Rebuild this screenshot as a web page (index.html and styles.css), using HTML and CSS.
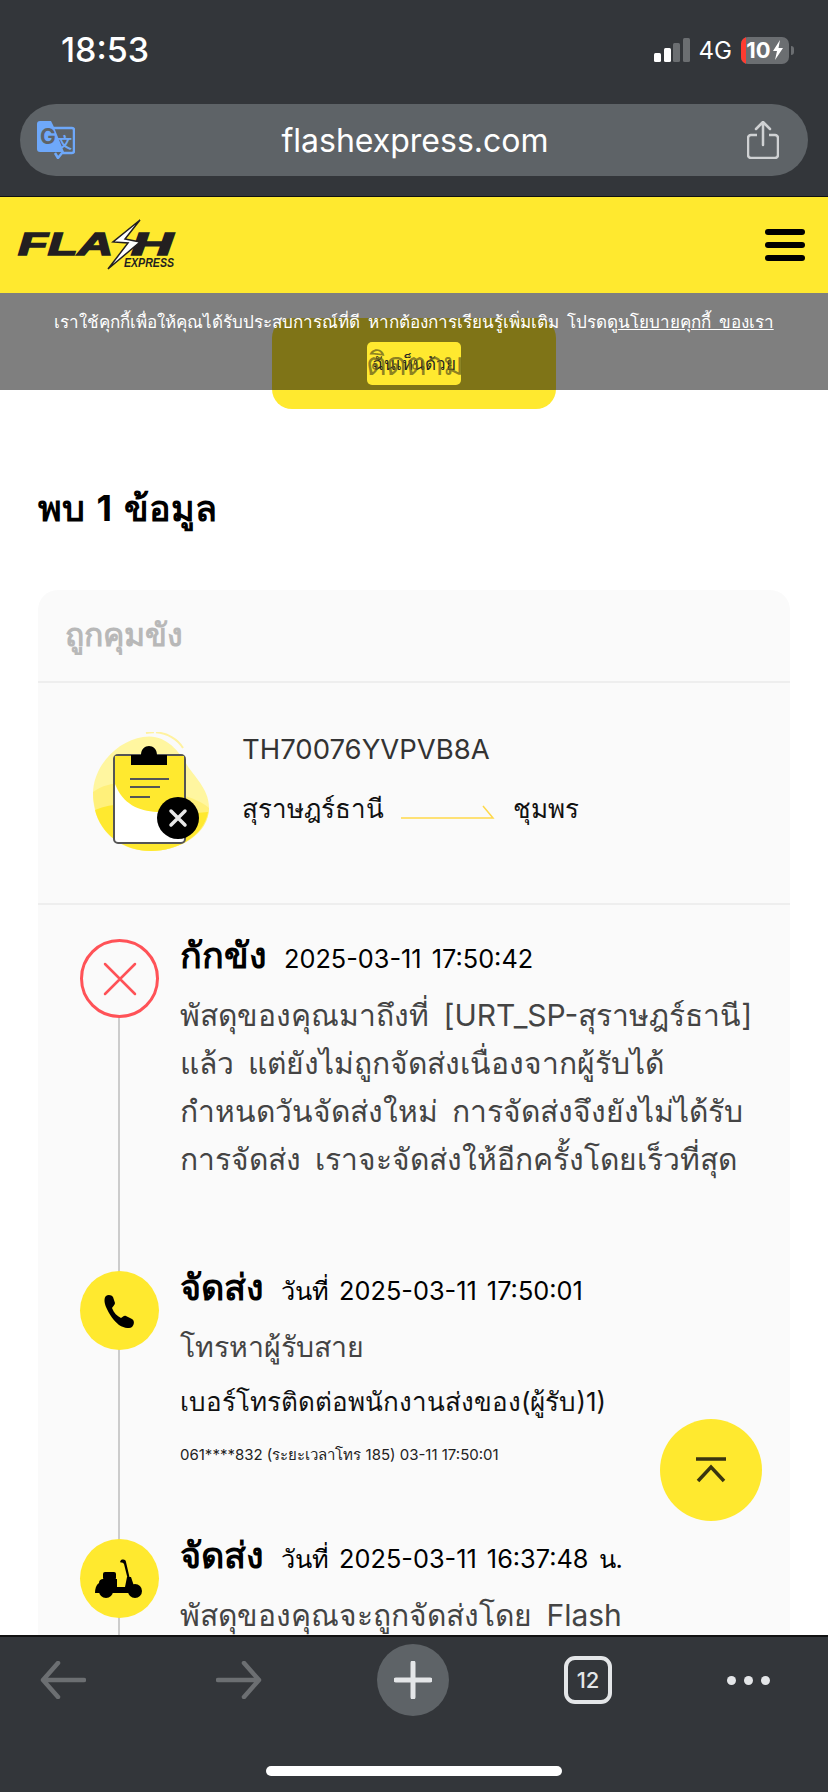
FILE: index.html
```html
<!DOCTYPE html>
<html lang="th">
<head>
  <meta charset="UTF-8" />
  <meta name="viewport" content="width=device-width, initial-scale=1.0"/>
  <title>Flash Express</title>
  <link rel="stylesheet" href="styles.css">
</head>
<body>
  <div class="phone">
    <div class="top-chrome">
      <div class="status-bar">
        <span class="clock">18:53</span>
        <div class="status-right">
          <svg class="signal" width="36" height="24" viewBox="0 0 36 24">
            <rect x="0" y="15" width="7" height="9" rx="1.5" fill="#fff"/>
            <rect x="10" y="10" width="7" height="14" rx="1.5" fill="#fff"/>
            <rect x="19" y="5" width="7" height="19" rx="1.5" fill="#6b6e71"/>
            <rect x="29" y="0" width="7" height="24" rx="1.5" fill="#6b6e71"/>
          </svg>
          <span class="net">4G</span>
          <span class="battery"><span class="battery-low"></span><span class="battery-text">10</span>
            <svg class="bolt" width="12" height="20" viewBox="0 0 12 20"><path d="M8 0 1 11h4l-2 9 8-12H6.500z" fill="#fff"/></svg>
          </span>
          <span class="battery-cap"></span>
        </div>
      </div>
      <div class="url-bar">
        <svg class="translate" width="38" height="38" viewBox="0 0 38 38">
          <path d="M16 7h19a2 2 0 0 1 2 2v21a2 2 0 0 1-2 2H25l-4 5-3-5" fill="none" stroke="#6ea8fa" stroke-width="2.500" stroke-linejoin="round"/>
          <path d="M3 0h11l2 4 11 27H3a3 3 0 0 1-3-3V3a3 3 0 0 1 3-3z" fill="#6ea8fa"/>
          <text class="icon-g" x="3" y="23">G</text>
          <text class="icon-wen" x="20" y="27">文</text>
        </svg>
        <span class="url-text">flashexpress.com</span>
        <svg class="share" width="32" height="38" viewBox="0 0 32 38">
          <path d="M10 14H4a3 3 0 0 0-3 3v17a3 3 0 0 0 3 3h24a3 3 0 0 0 3-3V17a3 3 0 0 0-3-3h-6" fill="none" stroke="#cfd1d3" stroke-width="2.500"/>
          <path d="M16 24V2M9 8l7-7 7 7" fill="none" stroke="#cfd1d3" stroke-width="2.500" stroke-linecap="round" stroke-linejoin="round"/>
        </svg>
      </div>
    </div>

    <header class="site-header">
      <svg class="logo" width="162" height="56" viewBox="0 0 162 56">
        <text class="logo-word" x="2" y="38" textLength="95" lengthAdjust="spacingAndGlyphs">FLA</text>
        <text class="logo-word" x="115" y="38" textLength="42" lengthAdjust="spacingAndGlyphs">H</text>
        <path d="M124 3 97 25l15 1-20 26 32-27-15-3z" fill="#fff" stroke="#231f20" stroke-width="1.500"/>
        <text class="logo-sub" x="108" y="50" textLength="50" lengthAdjust="spacingAndGlyphs">EXPRESS</text>
      </svg>
      <div class="burger"><span></span><span></span><span></span></div>
    </header>

    <main class="page">
      <div class="follow-row"><button class="follow-btn"><span class="follow-label">ติดตาม</span></button></div>
      <h1 class="result-title">พบ 1 ข้อมูล</h1>

      <section class="card">
        <div class="card-status">ถูกคุมขัง</div>
        <div class="parcel">
          <svg class="parcel-icon" width="116" height="122" viewBox="0 0 116 122">
            <path d="M50 5c22-4 36 14 44 28 6 10 22 24 22 42 0 26-30 44-58 44C24 119 0 96 0 62 0 34 24 9 50 5z" fill="#fff6a0"/>
            <path d="M0 60c20-14 40-8 58-4 20 4 44 8 58 20 0 26-30 43-58 43C24 119 0 92 0 60z" fill="#fff07a"/>
            <path d="M2 78c18-8 38-6 56-2 20 4 44 6 57 4-4 24-31 39-57 39C30 119 8 102 2 78z" fill="#ffe92f"/>
            <path d="M53 1c14-3 30 3 37 15" fill="none" stroke="#fff2a0" stroke-width="2" stroke-dasharray="8 2 40"/>
            <rect x="21" y="23" width="71" height="88" rx="4" fill="#fff" stroke="#555" stroke-width="2"/>
            <path d="M22 24h69v56H64C45 79 30 72 22 52z" fill="#ffe92f"/>
            <path d="M38 33V23h10c0-12 16-12 16 0h10v10z" fill="#000"/>
            <path d="M37 47h39M37 55h30M37 65h20" stroke="#555" stroke-width="2"/>
            <circle cx="85" cy="86" r="21" fill="#000"/>
            <path d="M78 79l14 14M92 79 78 93" stroke="#e8e8e8" stroke-width="3.500" stroke-linecap="round"/>
          </svg>
          <div class="parcel-info">
            <div class="parcel-no">TH70076YVPVB8A</div>
            <div class="route">
              <span>สุราษฎร์ธานี</span>
              <svg class="route-arrow" width="94" height="14" viewBox="0 0 94 14"><path d="M0 13h92L82 1" fill="none" stroke="#ffd94a" stroke-width="1.500"/></svg>
              <span>ชุมพร</span>
            </div>
          </div>
        </div>

        <div class="timeline">
          <div class="event event-hold">
            <div class="dot dot-red">
              <svg width="36" height="36" viewBox="0 0 36 36"><path d="M3 3l30 30M33 3 3 33" stroke="#ff5257" stroke-width="2.500" stroke-linecap="round"/></svg>
            </div>
            <div class="event-body">
              <div class="event-head"><b>กักขัง</b><span>2025-03-11 17:50:42</span></div>
              <p class="event-text">พัสดุของคุณมาถึงที่ [URT_SP-สุราษฎร์ธานี]<br>แล้ว แต่ยังไม่ถูกจัดส่งเนื่องจากผู้รับได้<br>กำหนดวันจัดส่งใหม่ การจัดส่งจึงยังไม่ได้รับ<br>การจัดส่ง เราจะจัดส่งให้อีกครั้งโดยเร็วที่สุด</p>
            </div>
          </div>

          <div class="event event-call">
            <div class="dot">
              <svg width="34" height="34" viewBox="0 0 34 34"><path d="M3 2c2-2 6-1 7 1l2 6c0 2-2 3-3 5 2 5 5 8 9 10 2-1 3-3 5-2l6 3c3 2 2 6 0 8-3 2-8 1-13-2C11 27 6 20 3 13 1 8 1 4 3 2z" fill="#000"/></svg>
            </div>
            <div class="event-body">
              <div class="event-head"><b>จัดส่ง</b><span>วันที่ 2025-03-11 17:50:01</span></div>
              <p class="event-text event-text-short">โทรหาผู้รับสาย</p>
              <p class="event-phone">เบอร์โทรติดต่อพนักงานส่งของ(ผู้รับ)1)</p>
              <p class="event-log">061****832 (ระยะเวลาโทร 185) 03-11 17:50:01</p>
            </div>
          </div>

          <div class="event">
            <div class="dot">
              <svg width="50" height="40" viewBox="0 0 50 40">
                <path d="M26 1c3-1 5 0 5 2l6 26h-2L29 5c-1-2-3-1-4-2z" fill="#000"/>
                <rect x="8" y="13" width="13" height="8" rx="2" fill="#000"/>
                <path d="M4 24c0-3 2-4 4-4h14v8l8 0 2-10h4l3 9c4 1 6 4 6 7H0c0-4 1-8 4-10z" fill="#000"/>
                <circle cx="11" cy="32" r="7" fill="#000"/>
                <circle cx="40" cy="32" r="7" fill="#000"/>
              </svg>
            </div>
            <div class="event-body">
              <div class="event-head"><b>จัดส่ง</b><span>วันที่ 2025-03-11 16:37:48 น.</span></div>
              <p class="event-text">พัสดุของคุณจะถูกจัดส่งโดย Flash</p>
            </div>
          </div>
        </div>
      </section>
    </main>

    <div class="cookie-bar">
      <p>เราใช้คุกกี้เพื่อให้คุณได้รับประสบการณ์ที่ดี หากต้องการเรียนรู้เพิ่มเติม โปรดดู<a href="#">นโยบายคุกกี้ ของเรา</a></p>
      <button class="cookie-btn">ฉันเห็นด้วย</button>
    </div>

    <button class="to-top">
      <svg width="32" height="26" viewBox="0 0 32 26"><path d="M1 2h30M3 24 16 10l13 14" fill="none" stroke="#3a3510" stroke-width="3.500"/></svg>
    </button>

    <nav class="bottom-bar">
      <div class="nav-row">
        <svg class="nav-back" width="46" height="38" viewBox="0 0 46 38"><path d="M44 19H3M18 2 3 19l15 17" fill="none" stroke="#6c6f72" stroke-width="4.500" stroke-linecap="round" stroke-linejoin="round"/></svg>
        <svg width="46" height="38" viewBox="0 0 46 38"><path d="M2 19h41M28 2l15 17-15 17" fill="none" stroke="#6c6f72" stroke-width="4.500" stroke-linecap="round" stroke-linejoin="round"/></svg>
        <div class="new-tab">
          <svg width="38" height="38" viewBox="0 0 38 38"><path d="M19 2v34M2 19h34" stroke="#e4e6e8" stroke-width="5" stroke-linecap="round"/></svg>
        </div>
        <div class="tabs-count">12</div>
        <div class="more"><span></span><span></span><span></span></div>
      </div>
      <div class="home-indicator"></div>
    </nav>
  </div>
</body>
</html>
```

FILE: styles.css
```css
* {
  margin: 0;
  padding: 0;
  box-sizing: border-box;
}

body {
  font-family: Inter, "Noto Sans", "DejaVu Sans", sans-serif;
  background: #fff;
}

.phone {
  position: relative;
  width: 828px;
  height: 1792px;
  display: flex;
  flex-direction: column;
  overflow: hidden;
}

/* browser chrome */
.top-chrome {
  height: 197px;
  flex: none;
  background: #33363a;
  border-bottom: 1px solid #111;
  color: #fff;
}

.status-bar {
  height: 104px;
  display: flex;
  justify-content: space-between;
  padding: 29px 34px 0 61px;
}

.clock {
  font-size: 34px;
  font-weight: 500;
  line-height: 42px;
}

.status-right {
  display: flex;
  align-items: center;
  height: 42px;
}

.signal {
  margin-right: 9px;
}

.net {
  font-size: 24px;
  margin-right: 9px;
}

.battery {
  position: relative;
  width: 48px;
  height: 27px;
  background: #6b6e71;
  border-radius: 7px;
  overflow: hidden;
  display: flex;
  align-items: center;
  justify-content: center;
  gap: 1px;
}

.battery-low {
  position: absolute;
  left: 0;
  top: 0;
  bottom: 0;
  width: 5px;
  background: #ff3b30;
}

.battery-text {
  position: relative;
  font-size: 22px;
  font-weight: 700;
}

.battery-cap {
  width: 3px;
  height: 9px;
  margin-left: 2px;
  background: #6b6e71;
  border-radius: 0 3px 3px 0;
}

.url-bar {
  height: 72px;
  margin: 0 20px;
  padding: 0 29px 0 17px;
  display: flex;
  align-items: center;
  justify-content: space-between;
  background: #5e6367;
  border-radius: 36px;
}

.icon-g {
  font-size: 21px;
  font-weight: 700;
  fill: #5e6367;
}

.icon-wen {
  font-family: "Noto Sans CJK SC", sans-serif;
  font-size: 15px;
  font-weight: 700;
  fill: #6ea8fa;
}

.url-text {
  margin-left: 8px;
  font-size: 32px;
  color: #fff;
}

/* site header */
.site-header {
  height: 96px;
  flex: none;
  display: flex;
  align-items: center;
  justify-content: space-between;
  padding: 0 23px 0 16px;
  background: #ffe92f;
}

.logo {
  overflow: visible;
}

.logo-word {
  font-family: "Liberation Sans", sans-serif;
  font-size: 31px;
  font-weight: 700;
  font-style: italic;
  fill: #231f20;
  stroke: #231f20;
  stroke-width: 1.5px;
}

.logo-sub {
  font-family: "Liberation Sans", sans-serif;
  font-size: 13px;
  font-weight: 700;
  font-style: italic;
  fill: #231f20;
}

.burger {
  display: flex;
  flex-direction: column;
  gap: 7px;
}

.burger span {
  display: block;
  width: 40px;
  height: 6px;
  background: #000;
  border-radius: 3px;
}

.page {
  flex: 1;
  min-height: 0;
  overflow: hidden;
  background: #fff;
}

.follow-row {
  display: flex;
  justify-content: center;
  padding-top: 25px;
}

.follow-btn {
  width: 284px;
  height: 91px;
  border: none;
  border-radius: 20px;
  background: #ffe92f;
  font-family: inherit;
  font-size: 32px;
  font-weight: 500;
  letter-spacing: -1px;
}

/* shows through the cookie button in the screenshot */
.follow-label {
  position: relative;
  z-index: 1;
  color: rgba(110, 100, 30, 0.8);
}

.result-title {
  margin: 74px 0 0 38px;
  font-size: 36px;
  font-weight: 700;
  line-height: 50px;
  word-spacing: 3px;
  color: #000;
}

.card {
  margin: 57px 38px 0;
  padding-bottom: 60px;
  background: #fafafa;
  border-radius: 20px 20px 0 0;
}

.card-status {
  height: 93px;
  padding-left: 27px;
  font-size: 32px;
  font-weight: 700;
  line-height: 90px;
  color: #b8b8b8;
  border-bottom: 2px solid #eee;
}

.parcel {
  height: 222px;
  display: flex;
  align-items: center;
  padding-left: 55px;
  border-bottom: 2px solid #eee;
}

.parcel-info {
  margin-left: 33px;
  padding-bottom: 29px;
}

.parcel-no {
  font-size: 27.5px;
  color: #333;
  line-height: 40px;
}

.route {
  display: flex;
  align-items: center;
  margin-top: 20px;
  font-size: 26px;
  color: #111;
  line-height: 40px;
}

.route-arrow {
  margin: 6px 18px 0 17px;
}

/* timeline */
.timeline {
  position: relative;
  padding: 34px 0 0 42px;
}

.timeline::before {
  content: '';
  position: absolute;
  left: 80px;
  top: 80px;
  bottom: -60px;
  width: 2px;
  background: #ccc;
}

.event {
  position: relative;
  display: flex;
  gap: 21px;
}

.event-hold {
  height: 332px;
}

.event-call {
  height: 268px;
}

.dot {
  flex: none;
  width: 79px;
  height: 79px;
  display: flex;
  align-items: center;
  justify-content: center;
  border-radius: 50%;
  background: #ffe92f;
}

.dot-red {
  background: #fafafa;
  border: 3px solid #ff5257;
}

.event-body {
  white-space: nowrap;
}

.event-head {
  display: flex;
  align-items: baseline;
  gap: 17px;
  line-height: 50px;
  margin-top: -9px;
  color: #000;
}

.event-head b {
  font-size: 36px;
  font-weight: 700;
}

.event-head span {
  font-size: 25.3px;
  word-spacing: 3px;
}

.event-text {
  margin-top: 7px;
  font-size: 30px;
  line-height: 48px;
  word-spacing: 6px;
  color: #444;
}

.event-text-short {
  font-size: 28.5px;
}

.event-phone {
  margin-top: 6px;
  font-size: 26px;
  line-height: 50px;
  color: #111;
}

.event-log {
  margin-top: 8px;
  font-size: 15px;
  line-height: 40px;
  color: #222;
}

/* lies over the top of the page */
.cookie-bar {
  position: absolute;
  left: 0;
  right: 0;
  top: 293px;
  height: 97px;
  padding-top: 15px;
  background: rgba(0, 0, 0, 0.5);
  text-align: center;
}

.cookie-bar p {
  font-size: 17px;
  line-height: 28px;
  word-spacing: 3px;
  color: #fff;
}

.cookie-bar a {
  color: #fff;
  text-decoration: underline;
}

.cookie-btn {
  width: 94px;
  height: 43px;
  margin-top: 6px;
  border: none;
  border-radius: 5px;
  background: #ffe92f;
  color: #222;
  font-family: inherit;
  font-size: 17px;
}

.to-top {
  position: absolute;
  left: 660px;
  top: 1419px;
  width: 102px;
  height: 102px;
  display: flex;
  align-items: center;
  justify-content: center;
  border: none;
  border-radius: 50%;
  background: #ffe92f;
}

/* bottom toolbar */
.bottom-bar {
  position: absolute;
  left: 0;
  right: 0;
  bottom: 0;
  height: 157px;
  background: #33363a;
  border-top: 2px solid #111;
}

.nav-row {
  display: flex;
  align-items: center;
  gap: 115px;
  padding: 7px 0 0 40px;
  height: 79px;
}

.nav-back {
  margin-right: 15px;
}

.new-tab {
  width: 72px;
  height: 72px;
  display: flex;
  align-items: center;
  justify-content: center;
  background: #5e6367;
  border-radius: 50%;
}

.tabs-count {
  width: 48px;
  height: 48px;
  display: flex;
  align-items: center;
  justify-content: center;
  border: 4px solid #e4e6e8;
  border-radius: 11px;
  font-size: 22px;
  font-weight: 500;
  color: #e4e6e8;
}

.more {
  display: flex;
  gap: 8px;
}

.more span {
  width: 9px;
  height: 9px;
  background: #e4e6e8;
  border-radius: 50%;
}

.home-indicator {
  width: 296px;
  height: 10px;
  margin: 50px auto 0;
  background: #fff;
  border-radius: 5px;
}
```
